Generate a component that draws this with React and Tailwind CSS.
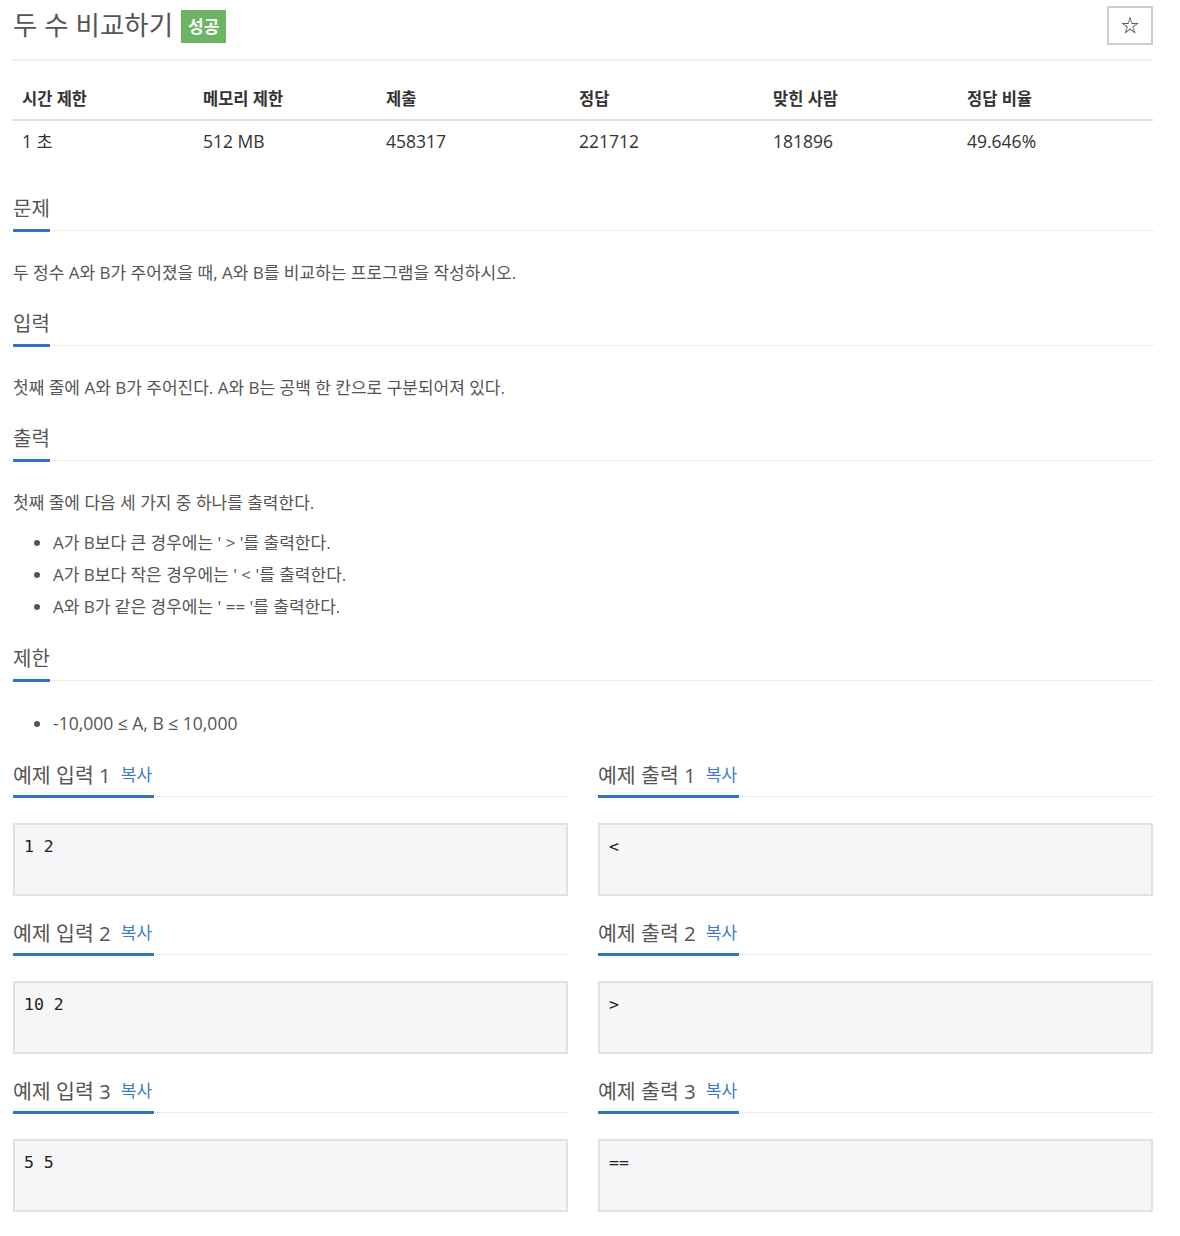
import React from "react";

const FONT = { fontFamily: '"Open Sans", "Noto Sans CJK KR", sans-serif' };
const MONO = { fontFamily: '"DejaVu Sans Mono", "Liberation Mono", monospace' };

function SectionHead({ children }) {
  return (
    <div className="flex border-b border-dotted border-[#d9d9d9] h-[37px]">
      <div className="border-b-[3px] border-[#3274c1] mb-[-2px] flex items-start">
        {children}
      </div>
    </div>
  );
}

function Heading({ title }) {
  return (
    <SectionHead>
      <span className="text-[20px] leading-[30px] text-[#555]">{title}</span>
    </SectionHead>
  );
}

function Sample({ title, num, value }) {
  return (
    <div>
      <SectionHead>
        <span className="text-[20.5px] leading-[30px] text-[#555]">
          {title} {num}
        </span>
        <span className="text-[17px] leading-[30px] text-[#3e7cc5] ml-[10px] pr-[2px]">복사</span>
      </SectionHead>
      <div
        className="mt-[26px] h-[73px] bg-[#f6f6f8] border-2 border-[#e1e1e6] px-[9px] pt-[11px] text-[16.5px] leading-[22px] text-[#222]"
        style={MONO}
      >
        {value}
      </div>
    </div>
  );
}

export default function App() {
  const cols = [
    ["시간 제한", "1 초", "w-[181px]"],
    ["메모리 제한", "512 MB", "w-[183px]"],
    ["제출", "458317", "w-[193px]"],
    ["정답", "221712", "w-[194px]"],
    ["맞힌 사람", "181896", "w-[194px]"],
    ["정답 비율", "49.646%", "flex-1"],
  ];
  return (
    <div className="bg-white w-[1180px] min-h-[1236px] px-[13px] text-[#555]" style={FONT}>
      <div className="w-[1140px]">
        {/* title */}
        <div className="flex items-start justify-between pt-[6px] h-[61px] border-b-2 border-[#eee]">
          <div className="flex items-center gap-[8px] h-[37px]">
            <span className="text-[26.5px] leading-[36px] text-[#555]">두 수 비교하기</span>
            <span className="bg-[#6db565] text-white text-[17px] font-bold leading-[33px] h-[33px] px-[7px] mt-[4px]">
              성공
            </span>
          </div>
          <div className="w-[46px] h-[39px] border-2 border-[#ccc] flex items-center justify-center text-[#333] text-[18px]">
            ☆
          </div>
        </div>

        {/* table */}
        <div className="mt-[19px]">
          <div className="flex h-[41px] border-b-2 border-[#ddd] items-center">
            {cols.map(([h, , w]) => (
              <div key={h} className={`${w} pl-[9px] text-[16.5px] font-bold text-[#333]`}>
                {h}
              </div>
            ))}
          </div>
          <div className="flex h-[40px] items-center">
            {cols.map(([h, v, w]) => (
              <div key={h} className={`${w} pl-[9px] text-[17.5px] text-[#333]`}>
                {v}
              </div>
            ))}
          </div>
        </div>

        {/* 문제 */}
        <div className="mt-[33px]">
          <Heading title="문제" />
          <p className="mt-[30px] text-[17px] leading-[24px] text-[#555]">
            두 정수 A와 B가 주어졌을 때, A와 B를 비교하는 프로그램을 작성하시오.
          </p>
        </div>

        {/* 입력 */}
        <div className="mt-[24px]">
          <Heading title="입력" />
          <p className="mt-[30px] text-[17px] leading-[24px] text-[#555]">
            첫째 줄에 A와 B가 주어진다. A와 B는 공백 한 칸으로 구분되어져 있다.
          </p>
        </div>

        {/* 출력 */}
        <div className="mt-[24px]">
          <Heading title="출력" />
          <p className="mt-[30px] text-[17px] leading-[24px] text-[#555]">
            첫째 줄에 다음 세 가지 중 하나를 출력한다.
          </p>
          <ul className="mt-[12px] pl-[40px] list-disc text-[17px] leading-[32px] text-[#555]">
            <li>A가 B보다 큰 경우에는 ' &gt; '를 출력한다.</li>
            <li>A가 B보다 작은 경우에는 ' &lt; '를 출력한다.</li>
            <li>A와 B가 같은 경우에는 ' == '를 출력한다.</li>
          </ul>
        </div>

        {/* 제한 */}
        <div className="mt-[21px]">
          <Heading title="제한" />
          <ul className="mt-[26px] pl-[40px] list-disc text-[17.5px] leading-[32px] text-[#555]">
            <li>-10,000 ≤ A, B ≤ 10,000</li>
          </ul>
        </div>

        {/* samples */}
        <div className="mt-[21px] grid grid-cols-2 gap-x-[30px] gap-y-[22px]">
          <Sample title="예제 입력" num="1" value="1 2" />
          <Sample title="예제 출력" num="1" value="<" />
          <Sample title="예제 입력" num="2" value="10 2" />
          <Sample title="예제 출력" num="2" value=">" />
          <Sample title="예제 입력" num="3" value="5 5" />
          <Sample title="예제 출력" num="3" value="==" />
        </div>
      </div>
    </div>
  );
}
